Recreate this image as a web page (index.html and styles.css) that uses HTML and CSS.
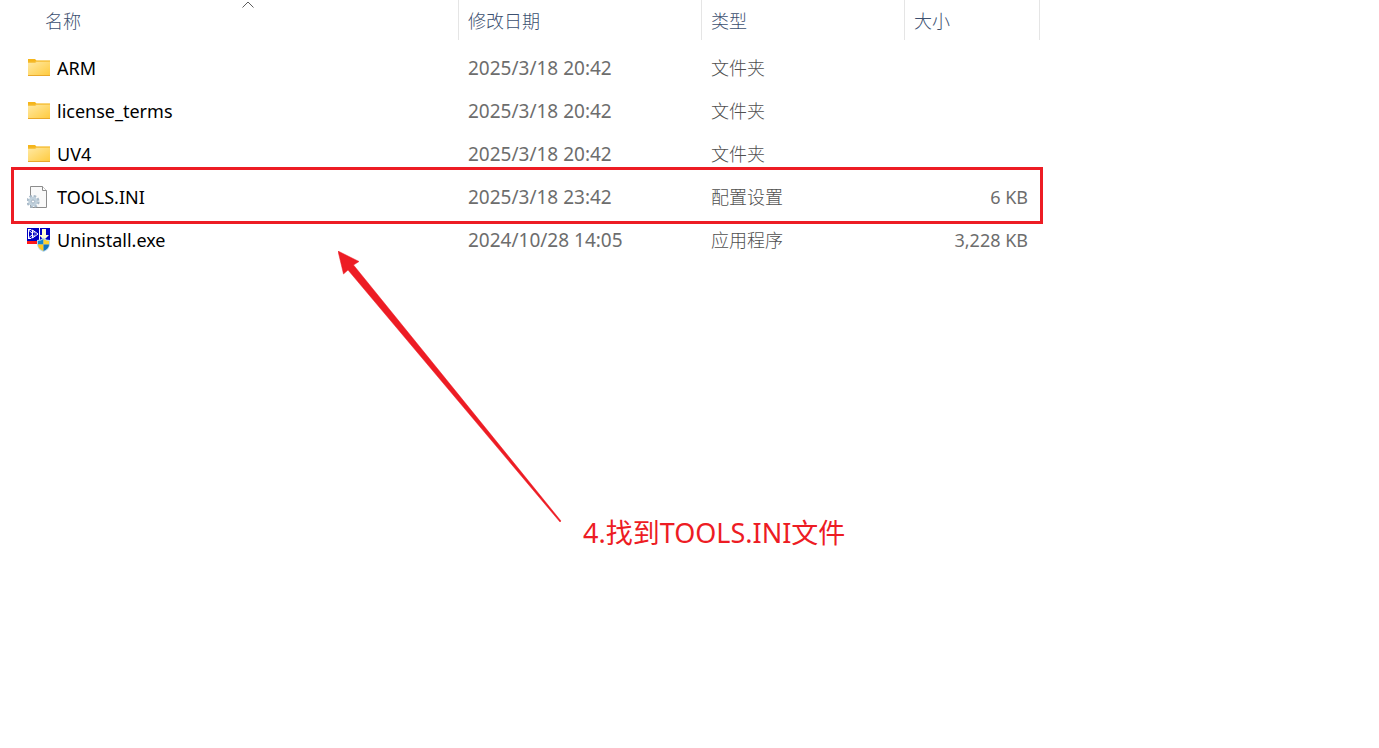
FILE: index.html
```html
<!DOCTYPE html>
<html lang="zh-CN">
<head>
<meta charset="utf-8">
<title>文件列表</title>
<link rel="stylesheet" href="styles.css">
</head>
<body>
<svg class="defs" aria-hidden="true">
  <defs>
    <linearGradient id="folder-front" x1="0" y1="0" x2="1" y2="1">
      <stop offset="0" stop-color="#ffe9a3"/>
      <stop offset="1" stop-color="#ffca3c"/>
    </linearGradient>
    <symbol id="folder" viewBox="0 1 24 24">
      <path d="M1 4h7l1.500 1.500H23V11H1z" fill="#f5b51b"/>
      <rect x="1" y="7" width="22" height="14" fill="url(#folder-front)"/>
      <path d="M1 6.800h7l1.500-1H23v1.200H9.500l-1.500 1H1z" fill="#f7c548"/>
      <rect x="1" y="20" width="22" height="1" fill="#e9a82b"/>
    </symbol>
  </defs>
</svg>
<main class="explorer">
  <table class="files">
    <colgroup>
      <col class="col-name"><col class="col-date"><col class="col-type"><col class="col-size">
    </colgroup>
    <thead>
      <tr>
        <th class="first" aria-sort="ascending">
          <svg class="sort" viewBox="0 0 12 7" aria-hidden="true"><path d="M.500 6.500L6 1l5.500 5.500" fill="none" stroke="#5c5c5c"/></svg>
          <button type="button">名称</button>
        </th>
        <th><button type="button">修改日期</button></th>
        <th><button type="button">类型</button></th>
        <th><button type="button">大小</button></th>
      </tr>
    </thead>
    <tbody>
      <tr><td class="name"><div class="entry"><svg class="icon" viewBox="0 0 24 24"><use href="#folder"/></svg><span>ARM</span></div></td><td>2025/3/18 20:42</td><td class="type">文件夹</td><td class="size"></td></tr>
      <tr><td class="name"><div class="entry"><svg class="icon" viewBox="0 0 24 24"><use href="#folder"/></svg><span>license_terms</span></div></td><td>2025/3/18 20:42</td><td class="type">文件夹</td><td class="size"></td></tr>
      <tr><td class="name"><div class="entry"><svg class="icon" viewBox="0 0 24 24"><use href="#folder"/></svg><span>UV4</span></div></td><td>2025/3/18 20:42</td><td class="type">文件夹</td><td class="size"></td></tr>
      <tr>
        <td class="name"><div class="entry">
          <svg class="icon" viewBox="0 0 24 24">
            <path d="M3.500 1.500h12l4 4v17h-16z" fill="#f9f9f9" stroke="#8c8c8c"/>
            <path d="M15.500 1.500v4h4" fill="#fff" stroke="#8c8c8c"/>
            <circle cx="6" cy="16.500" r="5.300" fill="none" stroke="#a9bac8" stroke-width="2.600" stroke-dasharray="2.500 1.660"/>
            <circle cx="6" cy="16.500" r="3.400" fill="#e8eff4" stroke="#c0d0dc" stroke-width="2.600"/>
            <circle cx="6" cy="16.500" r="1.600" fill="#fff" stroke="#879caf" stroke-width=".8"/>
          </svg><span>TOOLS.INI</span></div></td>
        <td>2025/3/18 23:42</td><td class="type">配置设置</td><td class="size">6 KB</td>
      </tr>
      <tr>
        <td class="name"><div class="entry">
          <svg class="icon" viewBox="0 0 24 24">
            <path d="M0 0h23v13H0z" fill="#0000c0"/>
            <path d="M0 13h12v3H0z" fill="#ff1a1a"/>
            <path d="M12 0h1v13h-1z" fill="#fff"/>
            <path d="M1.500 2v8L6 6zM5.500 2v8L11 6zM1 1.500h3l4 4M1 10.500h3l4-4" fill="none" stroke="#fff"/>
            <path d="M15 1h4v6h3l-5 5-5-5h3z" fill="#fffbd0"/>
            <path d="M10 12q4 0 6.500-2.500Q19 12 23 12v4q0 5-6.500 8Q10 21 10 16z" fill="#b6d9ef"/>
            <path d="M11 13q3 0 5.500-2v5.500H11z" fill="#1686cf"/>
            <path d="M16.500 11q2.500 2 5.500 2v3.500h-5.500z" fill="#ffd22e"/>
            <path d="M11 16.500h5.500V23Q11 20.500 11 16.500z" fill="#ffc91d"/>
            <path d="M16.500 16.500H22q0 4-5.500 6.500z" fill="#1475bd"/>
          </svg><span>Uninstall.exe</span></div></td>
        <td>2024/10/28 14:05</td><td class="type">应用程序</td><td class="size">3,228 KB</td>
      </tr>
    </tbody>
  </table>
  <div class="highlight"></div>
  <svg class="arrow" viewBox="0 0 224 272" aria-hidden="true">
    <path d="M0 0l21 10.500-5.500 3.500L223 270l-1 1L100 126 10 19l-4.500 4z" fill="#ed1c24" stroke="#ed1c24" stroke-width=".5"/>
  </svg>
  <p class="note">4.找到TOOLS.INI文件</p>
</main>
</body>
</html>
```
FILE: styles.css
```css
body {
  margin: 0;
  background: #fff;
  color: #6d6d6d;
  font-family: "Noto Sans", "Noto Sans CJK SC", sans-serif;
  font-size: 19px;
}

.defs {
  position: absolute;
  width: 0;
  height: 0;
}

.explorer {
  position: relative;
  min-height: 100vh;
}

.files {
  table-layout: fixed;
  width: 1040px;
  border-collapse: separate;
  border-spacing: 0;
}

.col-name { width: 459px; }
.col-date { width: 243px; }
.col-type { width: 203px; }
.col-size { width: 135px; }

th {
  position: relative;
  height: 40px;
  padding: 0 0 0 9px;
  border-right: 1px solid #e5e5e5;
  box-sizing: border-box;
  text-align: left;
}

th.first {
  padding-left: 45px;
}

th button {
  display: block;
  padding: 0;
  border: 0;
  background: none;
  color: #3c5070;
  font: 300 18px/40px "Noto Sans CJK SC", sans-serif;
}

.sort {
  position: absolute;
  top: 1px;
  left: 242px;
  width: 12px;
  height: 7px;
}

tbody::before {
  content: "";
  display: block;
  height: 6px;
}

td {
  box-sizing: border-box;
  height: 43px;
  padding: 0 0 0 9px;
  line-height: 40px;
  white-space: nowrap;
}

td.name {
  padding-left: 27px;
  color: #000;
  font-size: 18px;
}

td.type {
  padding-bottom: 2px;
  color: #505050;
  font-family: "Noto Sans CJK SC", sans-serif;
  font-size: 18px;
  font-weight: 300;
}

td.size {
  padding-right: 12px;
  font-size: 18px;
  text-align: right;
}

.entry {
  display: flex;
  align-items: center;
  gap: 6px;
}

.icon {
  flex: none;
  width: 24px;
  height: 24px;
}

.highlight {
  position: absolute;
  top: 167px;
  left: 11px;
  width: 1032px;
  height: 57px;
  box-sizing: border-box;
  border: 3px solid #ed1c24;
}

.arrow {
  position: absolute;
  top: 251px;
  left: 338px;
  width: 224px;
  height: 272px;
}

.note {
  position: absolute;
  top: 513px;
  left: 583px;
  margin: 0;
  color: #ed1c24;
  font-size: 27px;
  line-height: 40px;
  white-space: nowrap;
}
```
